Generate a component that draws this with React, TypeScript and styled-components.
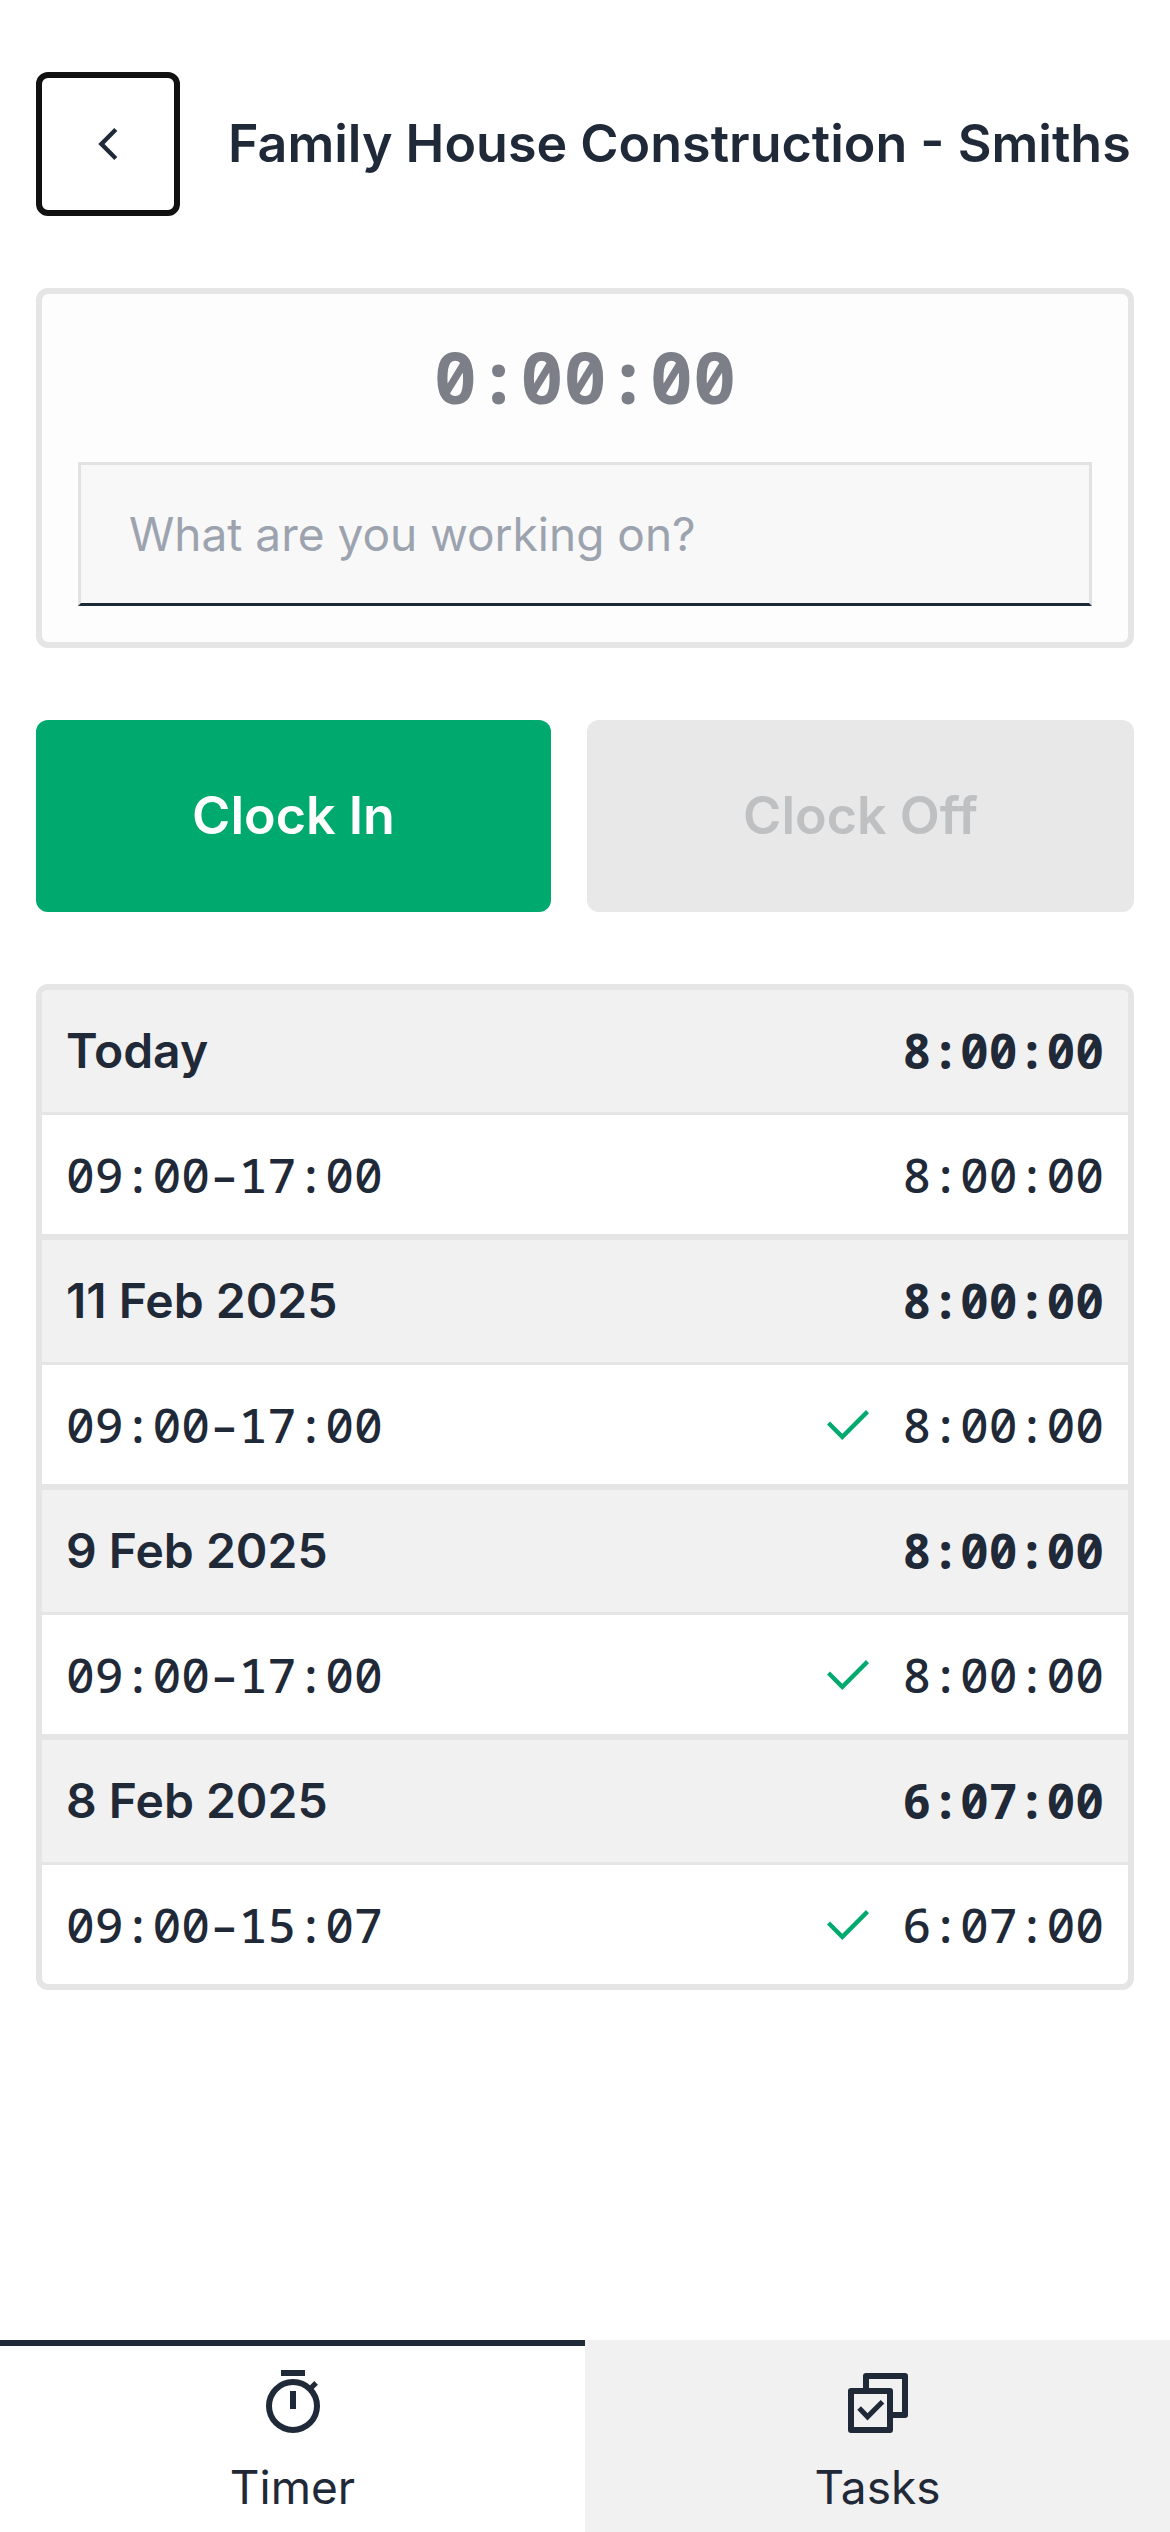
import React from "react";
import styled, { createGlobalStyle } from "styled-components";

const ink = "#1f2937";
const line = "#e5e5e5";
const muted = "#f1f1f1";
const green = "#00a96d";
const sans = `Inter, "Liberation Sans", sans-serif`;
const mono = `"Noto Sans Mono", "DejaVu Sans Mono", monospace`;

const GlobalStyle = createGlobalStyle`
  *, *::before, *::after { box-sizing: border-box; }
  body {
    margin: 0;
    background: #fff;
    color: ${ink};
    font-family: ${sans};
    font-size: 48px;
    line-height: 72px;
  }
  button, input { font: inherit; color: inherit; margin: 0; }
`;

const Page = styled.div`
  display: flex;
  flex-direction: column;
  min-height: 100vh;
`;

const Main = styled.main`
  flex: 1;
  display: flex;
  flex-direction: column;
  gap: 72px;
  padding: 72px 36px;
`;

const Header = styled.header`
  display: flex;
  align-items: center;
  gap: 48px;
`;

const BackButton = styled.button`
  flex: none;
  display: grid;
  place-items: center;
  width: 144px;
  height: 144px;
  padding: 0;
  background: #fff;
  border: 6px solid #111;
  border-radius: 12px;
`;

const Title = styled.h1`
  flex: 1;
  margin: 0;
  font-size: 52px;
  font-weight: 600;
  white-space: nowrap;
`;

const TimerCard = styled.section`
  display: flex;
  flex-direction: column;
  gap: 40px;
  padding: 36px;
  background: #fdfdfd;
  border: 6px solid ${line};
  border-radius: 12px;
`;

const Elapsed = styled.time`
  font-family: ${mono};
  font-size: 72px;
  font-weight: 700;
  line-height: 92px;
  text-align: center;
  color: #7c7f88;
`;

const TaskInput = styled.input`
  width: 100%;
  height: 144px;
  padding: 0 48px;
  background: #f8f8f8;
  border: 3px solid #e2e2e2;
  border-bottom-color: #1b2a36;
  border-radius: 0;
  outline: none;
  font-size: 46px;
  &::placeholder {
    color: #9ca3af;
    opacity: 1;
  }
`;

const Actions = styled.div`
  display: flex;
  gap: 36px;
`;

const ActionButton = styled.button`
  flex: 1 1 auto;
  height: 192px;
  padding: 0 24px;
  border: 0;
  border-radius: 12px;
  background: ${green};
  color: #fff;
  font-size: 52px;
  font-weight: 600;
  &:disabled {
    background: #e8e8e8;
    color: #bfc0c2;
  }
`;

const LogCard = styled.section`
  overflow: hidden;
  border: 6px solid ${line};
  border-radius: 12px;
`;

const LogTable = styled.table`
  width: 100%;
  border-collapse: separate;
  border-spacing: 0;
`;

const Day = styled.tbody`
  &:not(:last-child) > tr:last-child > td {
    border-bottom: 6px solid ${line};
  }
`;

const DayCell = styled.th`
  padding: 24px;
  background: ${muted};
  border-bottom: 3px solid ${line};
  font-weight: 600;
  line-height: 74px;
  text-align: left;
`;

const DayTotal = styled(DayCell).attrs({ as: "td" })`
  font-family: ${mono};
  font-weight: 700;
  text-align: right;
`;

const EntryCell = styled.td`
  padding: 24px;
  font-family: ${mono};
  font-weight: 500;
  line-height: 71px;
`;

const Duration = styled.div`
  display: flex;
  align-items: center;
  justify-content: flex-end;
  gap: 30px;
`;

const Nav = styled.nav`
  display: grid;
  grid-template-columns: 1fr 1fr;
`;

const Tab = styled.a<{ $active?: boolean }>`
  display: flex;
  flex-direction: column;
  align-items: center;
  gap: 12px;
  padding: 21px 0 9px;
  border-top: 6px solid ${(p) => (p.$active ? ink : muted)};
  background: ${(p) => (p.$active ? "#fff" : muted)};
  color: ${ink};
  font-size: 46px;
  text-decoration: none;
`;

const ChevronLeft = () => (
  <svg width="48" height="48" viewBox="0 0 48 48" fill="currentColor" aria-hidden="true">
    <path d="M14.3 24 30.3 8 33.3 11 20.5 24 33.3 37 30.3 40Z" />
  </svg>
);

const Check = () => (
  <svg width="48" height="48" viewBox="0 0 48 48" fill={green} role="img" aria-label="Approved">
    <path d="M18.3 39 3 23.6 6 20.4 18.3 32.8 42 9 45 12.2Z" />
  </svg>
);

const TimerIcon = () => (
  <svg width="72" height="72" viewBox="0 0 24 24" fill="none" stroke="currentColor" strokeWidth="2" aria-hidden="true">
    <circle cx="12" cy="13" r="8" />
    <path d="M8 2h8M12 8v6" />
    <path d="M17.4 7.6 19.7 5.3" strokeWidth="1.7" />
  </svg>
);

const TasksIcon = () => (
  <svg width="72" height="72" viewBox="0 0 24 24" fill="none" stroke="currentColor" strokeWidth="2" aria-hidden="true">
    <path d="M8 7V3h13v13h-4" strokeLinejoin="round" />
    <path d="M3 8h13v13H3z" strokeLinejoin="round" />
    <path d="M5.7 13.7 8.5 16.6 13.5 11.6" strokeWidth="1.7" />
  </svg>
);

const days = [
  { date: "Today", total: "8:00:00", entries: [{ span: "09:00–17:00", duration: "8:00:00", approved: false }] },
  { date: "11 Feb 2025", total: "8:00:00", entries: [{ span: "09:00–17:00", duration: "8:00:00", approved: true }] },
  { date: "9 Feb 2025", total: "8:00:00", entries: [{ span: "09:00–17:00", duration: "8:00:00", approved: true }] },
  { date: "8 Feb 2025", total: "6:07:00", entries: [{ span: "09:00–15:07", duration: "6:07:00", approved: true }] },
];

export default function App() {
  return (
    <Page>
      <GlobalStyle />
      <Main>
        <Header>
          <BackButton type="button" aria-label="Back">
            <ChevronLeft />
          </BackButton>
          <Title>Family House Construction - Smiths</Title>
        </Header>

        <TimerCard>
          <Elapsed>0:00:00</Elapsed>
          <TaskInput type="text" aria-label="What are you working on?" placeholder="What are you working on?" />
        </TimerCard>

        <Actions>
          <ActionButton type="button">Clock In</ActionButton>
          <ActionButton type="button" disabled>
            Clock Off
          </ActionButton>
        </Actions>

        <LogCard>
          <LogTable>
            {days.map((day) => (
              <Day key={day.date}>
                <tr>
                  <DayCell scope="rowgroup">{day.date}</DayCell>
                  <DayTotal>{day.total}</DayTotal>
                </tr>
                {day.entries.map((entry) => (
                  <tr key={entry.span}>
                    <EntryCell>{entry.span}</EntryCell>
                    <EntryCell>
                      <Duration>
                        {entry.approved && <Check />}
                        <span>{entry.duration}</span>
                      </Duration>
                    </EntryCell>
                  </tr>
                ))}
              </Day>
            ))}
          </LogTable>
        </LogCard>
      </Main>

      <Nav>
        <Tab href="#timer" $active aria-current="page">
          <TimerIcon />
          Timer
        </Tab>
        <Tab href="#tasks">
          <TasksIcon />
          Tasks
        </Tab>
      </Nav>
    </Page>
  );
}
